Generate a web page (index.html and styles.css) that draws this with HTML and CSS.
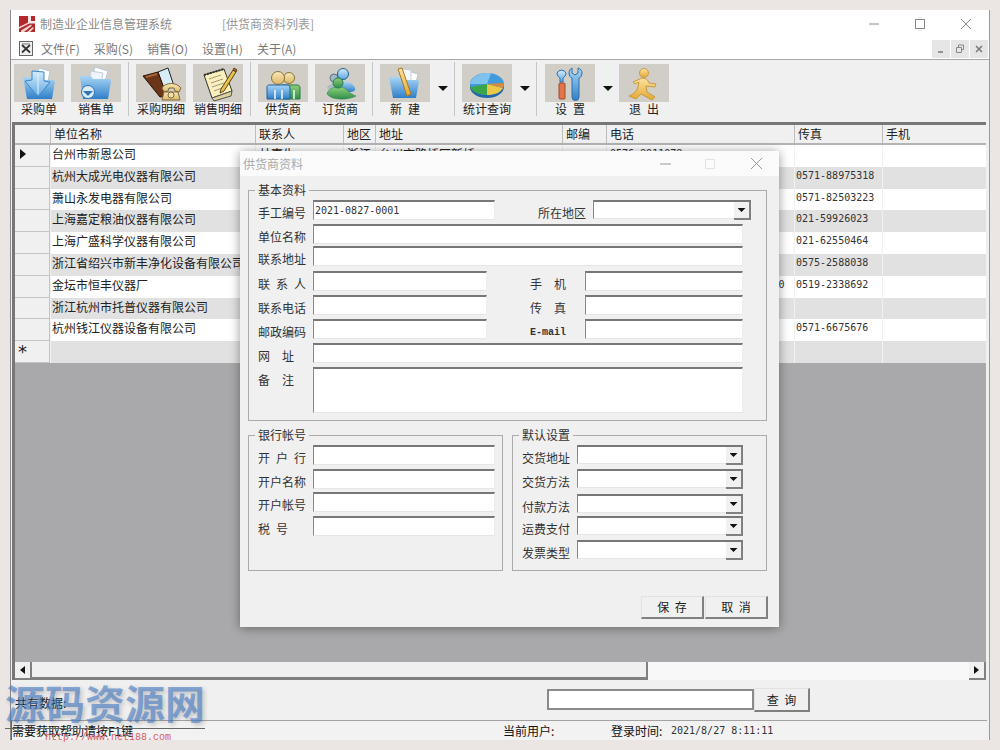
FILE: index.html
```html
<!DOCTYPE html>
<html lang="zh-CN">
<head>
<meta charset="utf-8">
<title>供货商资料列表</title>
<link rel="stylesheet" href="styles.css">
</head>
<body>
<svg class="defs" aria-hidden="true">
  <defs>
    <linearGradient id="gBlue" x1="0" y1="0" x2="0" y2="1"><stop offset="0" stop-color="#a9d6f5"/><stop offset="1" stop-color="#2f7fc9"/></linearGradient>
    <linearGradient id="gLight" x1="0" y1="0" x2="0" y2="1"><stop offset="0" stop-color="#d5ecfb"/><stop offset="1" stop-color="#5ba6e3"/></linearGradient>
    <linearGradient id="gGreen" x1="0" y1="0" x2="0" y2="1"><stop offset="0" stop-color="#8fd07a"/><stop offset="1" stop-color="#2f8f4a"/></linearGradient>
    <linearGradient id="gGold" x1="0" y1="0" x2="0" y2="1"><stop offset="0" stop-color="#fbe3a0"/><stop offset="1" stop-color="#e5a632"/></linearGradient>
    <linearGradient id="gSkin" x1="0" y1="0" x2="0" y2="1"><stop offset="0" stop-color="#f8e9b8"/><stop offset="1" stop-color="#dcb766"/></linearGradient>
  </defs>
</svg>
<div class="window">
  <header class="titlebar">
    <svg class="logo" viewBox="0 0 16 16"><rect width="16" height="16" fill="#b3272d"/><path d="M9 0h3v5h4v2.500H9z" fill="#f4e8e4"/><path d="M0 11l10-5 .8 1.200L0 12.800zM2 14.500l10-6 .8 1.200L5 16H2zM8 16l6-5 .8 1.200L11 16z" fill="#f1d6d0"/></svg>
    <span class="app-name">制造业企业信息管理系统</span>
    <span class="doc-name">[供货商资料列表]</span>
    <div class="win-ctrls">
      <span class="win-ctrl"><svg viewBox="0 0 12 12" width="12" height="12"><path d="M1 6h10" stroke="#8a8a8a"/></svg></span>
      <span class="win-ctrl"><svg viewBox="0 0 12 12" width="12" height="12"><rect x="1.500" y="1.500" width="9" height="9" fill="none" stroke="#8a8a8a"/></svg></span>
      <span class="win-ctrl"><svg viewBox="0 0 12 12" width="12" height="12"><path d="M1 1l10 10M11 1L1 11" stroke="#8a8a8a"/></svg></span>
    </div>
  </header>

  <nav class="menubar">
    <svg class="menu-icon" viewBox="0 0 14 15"><rect x=".5" y=".5" width="13" height="14" fill="#efefef" stroke="#666"/><path d="M3 4l8 7.500M11 4l-8 7.500" stroke="#333" stroke-width="1.800"/><path d="M3 3h8" stroke="#777"/></svg>
    <span class="menu-item">文件(F)</span>
    <span class="menu-item">采购(S)</span>
    <span class="menu-item">销售(O)</span>
    <span class="menu-item">设置(H)</span>
    <span class="menu-item">关于(A)</span>
    <div class="mdi-ctrls">
      <span class="mdi-btn"><svg viewBox="0 0 10 10" width="10" height="10"><path d="M2 8h5" stroke="#777" stroke-width="1.500"/></svg></span>
      <span class="mdi-btn"><svg viewBox="0 0 10 10" width="10" height="10"><path d="M3.500 3V1h5v4.500H7M1.500 3.500h5v5h-5z" fill="none" stroke="#888"/></svg></span>
      <span class="mdi-btn"><svg viewBox="0 0 10 10" width="10" height="10"><path d="M2 2l6 6M8 2L2 8" stroke="#777" stroke-width="1.500"/></svg></span>
    </div>
  </nav>

  <div class="toolbar">
    <div class="tool"><span class="tile"><svg viewBox="0 0 50 38"><path d="M25 4l11 3-3 15-11-3z" fill="#fff" stroke="#b9c7d4"/><path d="M9 13h9l2 3h19l2 1-3 18H13z" fill="url(#gBlue)"/><path d="M18 7l12 1v9l6 1-12 15-13-16 7-1z" fill="url(#gLight)" stroke="#3d85c6"/><path d="M24 10v20" stroke="#e4f3fd"/></svg></span><span class="tool-label">采购单</span></div>
    <div class="tool"><span class="tile"><svg viewBox="0 0 50 38"><path d="M24 3l13 4-4 14-13-4z" fill="#fff" stroke="#b9c7d4"/><path d="M20 7l12 2-2 12-12-2z" fill="#eef4f8" stroke="#c3ced8"/><path d="M9 12h11l2 3h17l1 2-3 18H12z" fill="url(#gBlue)"/><circle cx="17" cy="28" r="6.500" fill="#dcebf6" stroke="#2f74b5"/><path d="M12 27h10l-5 5z" fill="#2f74b5"/></svg></span><span class="tool-label">销售单</span></div>
    <div class="sep"></div>
    <div class="tool"><span class="tile"><svg viewBox="0 0 50 38"><path d="M22 8l10-4 6 18-10 4z" fill="#d8ecf7" stroke="#222"/><path d="M7 12l15-4 9 24-7 1z" fill="#6b3518" stroke="#2b1206"/><path d="M10 13l11-3" stroke="#a5673a" stroke-width="2"/><path d="M26 24c3-6 15-6 19 0l-2 4-4-1-1-3h-5l-1 3-4 1z" fill="url(#gSkin)" stroke="#7f6a3a"/><path d="M28 28h14l2 8H26z" fill="url(#gSkin)" stroke="#7f6a3a"/><circle cx="35" cy="31" r="3" fill="#efe0ae" stroke="#7f6a3a"/></svg></span><span class="tool-label">采购明细</span></div>
    <div class="tool"><span class="tile"><svg viewBox="0 0 50 38"><path d="M11 11l20-6 8 22-20 7z" fill="#fbf0bb" stroke="#333"/><path d="M11 11l20-6" stroke="#333" stroke-width="2" stroke-dasharray="2 1"/><path d="M16 15l12-4M18 19l12-4M19 23l12-4M21 27l8-3" stroke="#9a9a82"/><path d="M19 34l20-7-1 5-17 5z" fill="#dfd09a" stroke="#555"/><path d="M28 25L40 6l3 2-12 19-4 2z" fill="#e9c04f" stroke="#5a4614"/><path d="M40 6l1-2 3 2-1 2z" fill="#b75a3c" stroke="#5a4614"/></svg></span><span class="tool-label">销售明细</span></div>
    <div class="sep"></div>
    <div class="tool"><span class="tile"><svg viewBox="0 0 50 38"><circle cx="31" cy="14" r="5.500" fill="url(#gSkin)" stroke="#8b7338"/><path d="M24 21h15c2 0 3 1 3 3v11H24z" fill="url(#gGreen)" stroke="#2b7a3e"/><circle cx="20" cy="14" r="6.500" fill="url(#gSkin)" stroke="#8b7338"/><path d="M11 21h18c2 0 3 1 3 3v11H9V23c0-1 1-2 2-2z" fill="url(#gBlue)" stroke="#20609f"/><path d="M17 26v9M24 26v9M36 26v9" stroke="#f4f8fb" stroke-width="1.500"/></svg></span><span class="tool-label">供货商</span></div>
    <div class="tool"><span class="tile"><svg viewBox="0 0 50 38"><circle cx="19" cy="14" r="4" fill="#9fb6c4" stroke="#5d7687"/><path d="M12 24c1-5 11-6 13-2l-6 8z" fill="#a9bdc9"/><circle cx="28" cy="10" r="5.500" fill="url(#gLight)" stroke="#23608f"/><path d="M20 24c2-8 16-9 20 0 1 3-2 4-6 4H22z" fill="url(#gBlue)"/><path d="M12 30c1-7 14-10 20-4 3 3 6 5 9 6-7 4-24 5-29-2z" fill="url(#gGreen)" stroke="#2a7d4f" stroke-width=".5"/><circle cx="23" cy="19" r="5" fill="url(#gGreen)" stroke="#2a7d4f"/></svg></span><span class="tool-label">订货商</span></div>
    <div class="sep"></div>
    <div class="tool"><span class="tile"><svg viewBox="0 0 50 38"><path d="M25 6l13 4-3 13-13-4z" fill="#fff" stroke="#b9c7d4"/><path d="M21 5l10 1v14l-10-1z" fill="#f5f8fb" stroke="#c4cfd8"/><path d="M9 13h10l3 3h15l2 1-3 17H13z" fill="url(#gBlue)"/><path d="M18 5l4-1 9 26-4 2z" fill="url(#gGold)" stroke="#a27a22"/></svg></span><span class="tool-label spaced">新建</span></div>
    <span class="drop"></span>
    <div class="sep"></div>
    <div class="tool"><span class="tile"><svg viewBox="0 0 50 38"><ellipse cx="25" cy="23" rx="17" ry="11" fill="#2268a8"/><ellipse cx="25" cy="20" rx="17" ry="11" fill="#3f9bdc"/><path d="M25 20l-17 3c2 5 10 8 17 8z" fill="#3aa549"/><path d="M25 20v11c7 0 13-2 16-7z" fill="#ecc848"/><path d="M25 20l16 4c1-2 1-3 0-5z" fill="#d98a3a"/><path d="M25 20l-17 0c1-6 8-11 17-11 2 0 3 0 4 .5z" fill="#7fc2ee"/></svg></span><span class="tool-label">统计查询</span></div>
    <span class="drop"></span>
    <div class="sep sep-wide"></div>
    <div class="tool"><span class="tile"><svg viewBox="0 0 50 38"><path d="M12 9a5 5 0 0 1 9 0c0 3-2 4-3 5v4h-3v-4c-1-1-3-2-3-5z" fill="url(#gLight)" stroke="#2c6fa8"/><rect x="14" y="19" width="6" height="16" rx="1" fill="#e2764a" stroke="#9d4a28"/><path d="M27 4v5l3 2 3-2V4c3 1 4 3 4 5 0 3-2 5-3 5v19a2 2 0 0 1-7 0V14c-1 0-3-2-3-5 0-2 1-4 3-5z" fill="url(#gBlue)" stroke="#2c6fa8"/></svg></span><span class="tool-label spaced">设置</span></div>
    <span class="drop"></span>
    <div class="tool"><span class="tile"><svg viewBox="0 0 50 38"><circle cx="25" cy="9" r="4.500" fill="url(#gGold)" stroke="#c99b3b"/><path d="M23 14c4 0 6 2 7 5l7 1-1 3-9-1 1 6 8 5-3 3-11-6-5 5-7-3c5-2 8-5 9-9l1-5-4 2-2-2z" fill="url(#gGold)" stroke="#c99b3b"/></svg></span><span class="tool-label spaced">退出</span></div>
  </div>

  <section class="grid-frame">
    <div class="row head"><span></span><span>单位名称</span><span>联系人</span><span>地区</span><span>地址</span><span>邮编</span><span>电话</span><span>传真</span><span>手机</span></div>
    <div class="row"><span class="ind"><i class="pointer"></i></span><span>台州市新恩公司</span><span class="pad">林嘉生</span><span class="pad">浙江</span><span class="pad">台州市路桥区新桥</span><span></span><span class="num pad">0576-8911078</span><span></span><span></span></div>
    <div class="row alt"><span class="ind"></span><span>杭州大成光电仪器有限公司</span><span></span><span></span><span></span><span></span><span></span><span class="num">0571-88975318</span><span></span></div>
    <div class="row"><span class="ind"></span><span>萧山永发电器有限公司</span><span></span><span></span><span></span><span></span><span></span><span class="num">0571-82503223</span><span></span></div>
    <div class="row alt"><span class="ind"></span><span>上海嘉定粮油仪器有限公司</span><span></span><span></span><span></span><span></span><span></span><span class="num">021-59926023</span><span></span></div>
    <div class="row"><span class="ind"></span><span>上海广盛科学仪器有限公司</span><span></span><span></span><span></span><span></span><span></span><span class="num">021-62550464</span><span></span></div>
    <div class="row alt"><span class="ind"></span><span>浙江省绍兴市新丰净化设备有限公司</span><span></span><span></span><span></span><span></span><span></span><span class="num">0575-2588038</span><span></span></div>
    <div class="row"><span class="ind"></span><span>金坛市恒丰仪器厂</span><span></span><span></span><span></span><span></span><span class="num pad">0519-2338690 0519-2338691 100</span><span class="num">0519-2338692</span><span></span></div>
    <div class="row alt"><span class="ind"></span><span>浙江杭州市托普仪器有限公司</span><span></span><span></span><span></span><span></span><span></span><span></span><span></span></div>
    <div class="row"><span class="ind"></span><span>杭州钱江仪器设备有限公司</span><span></span><span></span><span></span><span></span><span></span><span class="num">0571-6675676</span><span></span></div>
    <div class="row alt"><span class="ind star">*</span><span></span><span></span><span></span><span></span><span></span><span></span><span></span><span></span></div>
    <div class="grid-empty"></div>
    <div class="hscroll">
      <span class="sb-btn"><i class="tri-left"></i></span>
      <span class="sb-thumb"></span>
      <span class="sb-track"></span>
      <span class="sb-btn sb-end"><i class="tri-right"></i></span>
    </div>
  </section>

  <div class="querybar">
    <span class="count">共有数据:</span>
    <input class="query-input" type="text" aria-label="查询">
    <span class="btn query-btn">查 询</span>
  </div>

  <footer class="statusbar">
    <span class="st-help">需要获取帮助请按F1键</span>
    <span class="st-user">当前用户:</span>
    <span class="st-time">登录时间:</span>
    <span class="st-date">2021/8/27 8:11:11</span>
  </footer>

  <div class="dialog">
    <div class="dlg-title">
      <span class="dlg-name">供货商资料</span>
      <svg class="dlg-ctrls" viewBox="0 0 110 12" width="110" height="12"><path d="M0 6h11" stroke="#999"/><rect x="45.500" y="1.500" width="9" height="9" fill="none" stroke="#e4e4e4"/><path d="M91 0l11 11M102 0L91 11" stroke="#999"/></svg>
    </div>
    <div class="dlg-body">
      <fieldset class="group group-basic">
        <legend>基本资料</legend>
        <div class="frow h24"><label class="lbl">手工编号</label><input class="field w-code" type="text" value="2021-0827-0001"><label class="lbl lbl-area">所在地区</label><div class="combo w-area"><span class="combo-btn"><i class="tri-down"></i></span></div></div>
        <div class="frow h22"><label class="lbl">单位名称</label><input class="field w-full" type="text"></div>
        <div class="frow h25"><label class="lbl">联系地址</label><input class="field w-full" type="text"></div>
        <div class="frow h24"><label class="lbl wide6">联系人</label><input class="field w-half" type="text"><label class="lbl lbl-right wide12">手机</label><input class="field w-right" type="text"></div>
        <div class="frow h24"><label class="lbl">联系电话</label><input class="field w-half" type="text"><label class="lbl lbl-right wide12">传真</label><input class="field w-right" type="text"></div>
        <div class="frow h24"><label class="lbl">邮政编码</label><input class="field w-half" type="text"><label class="lbl lbl-right lbl-mail">E-mail</label><input class="field w-right" type="text"></div>
        <div class="frow h24"><label class="lbl wide12">网址</label><input class="field w-full" type="text"></div>
        <div class="frow"><label class="lbl wide12">备注</label><textarea class="field w-full note"></textarea></div>
      </fieldset>
      <div class="group-pair">
        <fieldset class="group group-half">
          <legend>银行帐号</legend>
          <div class="frow h24"><label class="lbl wide6">开户行</label><input class="field w-bank" type="text"></div>
          <div class="frow h23"><label class="lbl">开户名称</label><input class="field w-bank" type="text"></div>
          <div class="frow h24"><label class="lbl">开户帐号</label><input class="field w-bank" type="text"></div>
          <div class="frow h24"><label class="lbl wide6">税号</label><input class="field w-bank" type="text"></div>
        </fieldset>
        <fieldset class="group group-half">
          <legend>默认设置</legend>
          <div class="frow h24"><label class="lbl">交货地址</label><div class="combo w-def"><span class="combo-btn"><i class="tri-down"></i></span></div></div>
          <div class="frow h25"><label class="lbl">交货方法</label><div class="combo w-def"><span class="combo-btn"><i class="tri-down"></i></span></div></div>
          <div class="frow h22"><label class="lbl">付款方法</label><div class="combo w-def"><span class="combo-btn"><i class="tri-down"></i></span></div></div>
          <div class="frow h24"><label class="lbl">运费支付</label><div class="combo w-def"><span class="combo-btn"><i class="tri-down"></i></span></div></div>
          <div class="frow h24"><label class="lbl">发票类型</label><div class="combo w-def"><span class="combo-btn"><i class="tri-down"></i></span></div></div>
        </fieldset>
      </div>
      <div class="dlg-actions">
        <span class="btn dlg-btn">保 存</span>
        <span class="btn dlg-btn">取 消</span>
      </div>
    </div>
  </div>
</div>

<div class="watermark">
  <span class="wm-name">源码资源网</span>
  <span class="wm-rule"></span>
  <span class="wm-url">http://www.net188.com</span>
</div>
</body>
</html>
```

FILE: styles.css
```css
* { box-sizing: border-box; }
html, body { margin: 0; height: 100%; }
body {
  position: relative;
  width: 1000px;
  height: 750px;
  padding: 10px;
  overflow: hidden;
  background: #ebe6e4;
  font: 12px/14px "Noto Sans CJK SC", "Liberation Sans", sans-serif;
  color: #222;
}
.defs { position: absolute; width: 0; height: 0; }

.window {
  position: relative;
  width: 980px;
  height: 730px;
  display: flex;
  flex-direction: column;
  background: #f0f0f0;
  border-left: 1px solid #8c8c8c;
  border-right: 1px solid #9a9a9a;
}

/* title */
.titlebar {
  height: 28px;
  display: flex;
  align-items: center;
  background: #fff;
  padding-left: 8px;
  flex: none;
}
.logo { width: 16px; height: 16px; margin-right: 5px; }
.app-name { color: #8a8a8a; width: 182px; }
.doc-name { color: #999; }
.win-ctrls { margin-left: auto; display: flex; }
.win-ctrl { width: 46px; height: 28px; display: flex; align-items: center; justify-content: center; }

/* menu */
.menubar {
  height: 21px;
  display: flex;
  align-items: center;
  gap: 14px;
  background: #fff;
  padding-left: 8px;
  flex: none;
}
.menu-icon { width: 14px; height: 15px; margin-right: -6px; flex: none; }
.menu-item { color: #777; white-space: nowrap; }
.mdi-ctrls { margin-left: auto; display: flex; gap: 1px; padding-right: 1px; }
.mdi-btn { width: 18px; height: 18px; display: flex; align-items: center; justify-content: center; background: #e6e6e6; }

/* toolbar */
.toolbar {
  height: 63px;
  flex: none;
  display: flex;
  align-items: flex-start;
  padding: 4px 0 0 3px;
  background: #f0f0f0;
  border-top: 1px solid #a8a8a8;
}
.tool { width: 50px; margin-right: 7px; display: flex; flex-direction: column; align-items: center; flex: none; }
.tile { width: 50px; height: 38px; background: #d1cec8; display: block; }
.tile svg { width: 50px; height: 38px; display: block; }
.tool-label { margin-top: 0; line-height: 14px; color: #222; white-space: nowrap; }
.tool-label.spaced { letter-spacing: 6px; margin-right: -6px; }
.sep { width: 1px; height: 54px; margin: -2px 7px 0 0; background: #c6c6c6; flex: none; }
.sep-wide { margin-right: 8px; }
.drop {
  width: 12px;
  height: 5px;
  margin: 22px 5px 0 0;
  flex: none;
  background: #111;
  clip-path: polygon(8% 0, 92% 0, 50% 100%);
}

/* data grid */
.grid-frame {
  flex: 1;
  min-height: 0;
  margin: 0 3px 0 1px;
  display: flex;
  flex-direction: column;
  background: #f0f0f0;
  border-top: 3px solid #777;
  border-left: 3px solid #777;
}
.row {
  display: grid;
  grid-template-columns: 35px 205px 88px 32px 187px 44px 188px 88px 103px;
  height: 21.8px;
  flex: none;
  background: #fff;
  line-height: 17px;
  white-space: nowrap;
}
.row > span { padding-left: 1px; border-left: 1px solid #f1f1f1; overflow: hidden; }
.row.alt { background: #e1e1e1; }
.row.head { height: 20px; background: #f0f0f0; border-bottom: 2px solid #b4b4b4; }
.row.head > span { padding-left: 3px; border-left: 1px solid #bdbdbd; line-height: 17px; }
.row.head > span:first-child { border-left: 0; }
.row > .ind { background: #f0f0f0; border-left: 0; border-right: 1px solid #c4c4c4; border-bottom: 1px solid #c4c4c4; position: relative; padding: 0; }
.row > .pad { padding-left: 3px; }
.pointer {
  display: block;
  width: 6px;
  height: 10px;
  margin: 4px 0 0 5px;
  background: #111;
  clip-path: polygon(0 0, 100% 50%, 0 100%);
}
.row > .star { font: 18px/22px "DejaVu Sans", sans-serif; color: #222; padding-left: 3px; }
.num { font-family: "DejaVu Sans Mono", monospace; font-size: 10px; color: #333; }
.grid-empty { flex: 1; background: #a9a9ab; }

.hscroll { height: 18px; display: flex; flex: none; background: #f7f7f7; }
.sb-btn { width: 17px; display: flex; align-items: center; justify-content: center; background: #f0f0f0; border-right: 2px solid #808080; border-bottom: 2px solid #808080; }
.sb-thumb { width: 616px; background: #f0f0f0; border-right: 2px solid #808080; border-bottom: 3px solid #808080; }
.sb-track { flex: 1; background: #f8f8f8; }
.sb-end { border-left: 0; }
.tri-left, .tri-right { display: block; width: 5px; height: 8px; background: #111; }
.tri-left { clip-path: polygon(100% 0, 100% 100%, 0 50%); }
.tri-right { clip-path: polygon(0 0, 100% 50%, 0 100%); }

/* query bar */
.querybar { height: 40px; flex: none; display: flex; align-items: flex-start; padding-top: 8px; }
.count { width: 536px; padding: 8px 0 0 4px; color: #111; }
.query-input { width: 207px; height: 21px; margin: 1px 0 0; padding: 0; background: #fff; border: 2px solid #8a8a8a; border-radius: 0; outline: 0; }
.btn {
  display: flex;
  align-items: center;
  justify-content: center;
  background: #f0f0f0;
  border-top: 1px solid #e2e2e2;
  border-left: 1px solid #e2e2e2;
  border-right: 2px solid #808080;
  border-bottom: 2px solid #808080;
  color: #222;
  white-space: pre;
  word-spacing: 3px;
}
.query-btn { width: 56px; height: 24px; }

/* status */
.statusbar {
  height: 20px;
  flex: none;
  display: flex;
  align-items: center;
  background: #f2f2f2;
  border-top: 1px solid #a2a2a2;
  border-left: 1px solid #666;
  margin-right: 2px;
  color: #111;
}
.st-help { width: 491px; }
.st-user { width: 108px; }
.st-time { width: 60px; }
.st-date { font: 10px/14px "DejaVu Sans Mono", monospace; color: #333; }

/* dialog */
.dialog {
  position: absolute;
  left: 229px;
  top: 141px;
  width: 539px;
  height: 476px;
  display: flex;
  flex-direction: column;
  background: #f0f0f0;
  box-shadow: 0 1px 10px rgba(0, 0, 0, .4);
}
.dlg-title { height: 25px; flex: none; display: flex; align-items: center; background: #fbfbfb; padding: 0 9px 0 3px; }
.dlg-name { color: #aaa; }
.dlg-ctrls { margin-left: auto; }
.dlg-body { flex: 1; padding: 7px 12px 0 8px; display: flex; flex-direction: column; }

.group { margin: 0; padding: 3px 0 0 9px; border: 1px solid #ababab; min-width: 0; }
.group legend { margin-left: -3px; padding: 0 3px; line-height: 14px; color: #333; }
.group-basic { height: 238px; }
.group-pair { display: flex; gap: 9px; margin-top: 7px; }
.group-half { width: 255px; height: 143px; }

.frow { display: flex; align-items: flex-start; }
.h22 { height: 22px; }
.h23 { height: 23px; }
.h24 { height: 24px; }
.h25 { height: 25px; }
.lbl { width: 55px; flex: none; padding-top: 6px; line-height: 14px; color: #333; white-space: nowrap; }
.wide6 { letter-spacing: 6px; }
.wide12 { letter-spacing: 12px; }
.lbl-area { margin-left: 43px; }
.lbl-right { margin-left: 43px; }
.lbl-mail { font: bold 10px/14px "Liberation Mono", monospace; padding-top: 7px; }

.field {
  display: block;
  height: 20px;
  margin: 0;
  padding: 0 0 0 1px;
  flex: none;
  background: #fff;
  border-style: solid;
  border-color: #777 #ececec #e6e6e6 #8a8a8a;
  border-width: 2px 1px 1px 1px;
  border-radius: 0;
  outline: 0;
  resize: none;
  font: 10px/14px "DejaVu Sans Mono", monospace;
  color: #333;
}
.w-code { width: 182px; }
.w-full { width: 430px; }
.w-half { width: 174px; }
.w-right { width: 158px; }
.w-bank { width: 182px; }
.note { height: 46px; }

.combo {
  position: relative;
  height: 19px;
  flex: none;
  display: flex;
  justify-content: flex-end;
  background: #fff;
  border-top: 2px solid #777;
  border-left: 1px solid #8a8a8a;
  border-bottom: 1px solid #e6e6e6;
}
.w-area { width: 158px; margin-left: 0; }
.w-def { width: 166px; }
.combo-btn {
  width: 17px;
  height: 18px;
  margin-bottom: -1px;
  display: flex;
  align-items: center;
  justify-content: center;
  background: #f0f0f0;
  border-right: 2px solid #808080;
  border-bottom: 2px solid #808080;
}
.tri-down { display: block; width: 8px; height: 4px; background: #111; clip-path: polygon(0 0, 100% 0, 50% 100%); }

.dlg-actions { display: flex; gap: 1px; justify-content: flex-end; margin: 25px -1px 0 0; }
.dlg-btn { width: 63px; height: 23px; }

/* watermark over the corner */
.watermark {
  position: absolute;
  left: 5px;
  top: 680px;
  width: 200px;
  display: flex;
  flex-direction: column;
  pointer-events: none;
}
.wm-name {
  font: bold 40px/44px "Noto Sans CJK SC", sans-serif;
  color: rgba(66, 122, 195, .62);
  text-shadow: 2px 2px 4px rgba(80, 80, 90, .3);
  white-space: nowrap;
}
.wm-rule { height: 1px; margin-top: 4px; background: #666; }
.wm-url { margin: 3px 0 0 40px; font: 10px/12px "Liberation Mono", monospace; color: #d9605c; white-space: nowrap; }
```
